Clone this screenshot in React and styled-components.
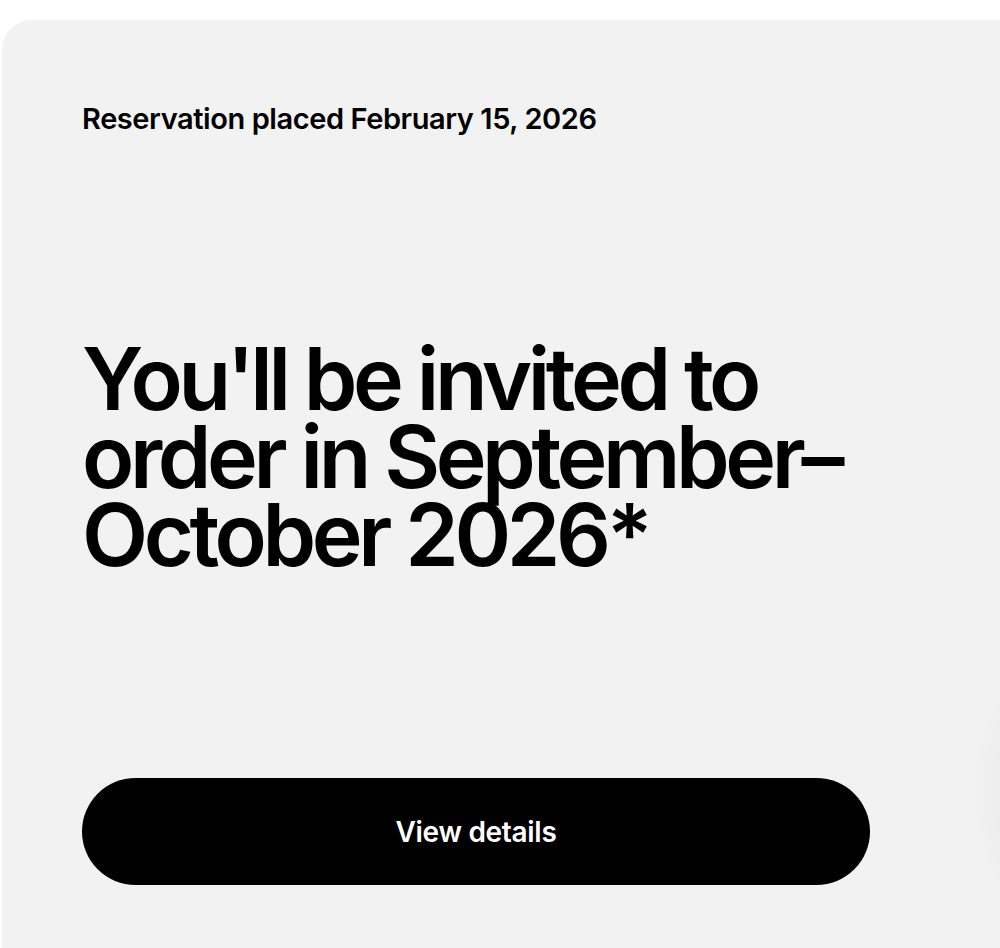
import React from "react";
import styled, { createGlobalStyle } from "styled-components";

const Global = createGlobalStyle`
  html, body {
    margin: 0;
    padding: 0;
    background: #ffffff;
    overflow: hidden;
  }
  body {
    font-family: Inter, "Noto Sans", "Liberation Sans", sans-serif;
    color: #000;
    -webkit-font-smoothing: antialiased;
  }
`;

const Page = styled.div`
  padding: 20px 0 0 2px;
  width: 1000px;
  height: 948px;
  box-sizing: border-box;
`;

const Card = styled.section`
  width: 1060px;
  height: 960px;
  box-sizing: border-box;
  border-radius: 30px;
  background-color: #f2f2f2;
  background-image: radial-gradient(
    ellipse 60px 120px at 1030px 770px,
    rgba(0, 0, 0, 0.05),
    rgba(0, 0, 0, 0) 100%
  );
  padding: 81px 0 0 80px;
  display: flex;
  flex-direction: column;
  align-items: flex-start;
`;

const Meta = styled.p`
  margin: 0;
  font-size: 29px;
  line-height: 36px;
  font-weight: 560;
  letter-spacing: -0.42px;
`;

const Heading = styled.h1`
  margin: 203px 0 0 0;
  font-size: 86px;
  line-height: 78px;
  font-weight: 620;
  letter-spacing: -4.4px;
`;

const Action = styled.button`
  margin-top: 204px;
  width: 788px;
  height: 107px;
  border: none;
  border-radius: 54px;
  background: #000;
  color: #fff;
  font-family: inherit;
  font-size: 28px;
  font-weight: 560;
  letter-spacing: -0.3px;
  cursor: pointer;
`;

export default function App() {
  return (
    <>
      <Global />
      <Page>
        <Card>
          <Meta>Reservation placed February 15, 2026</Meta>
          <Heading>
            You'll be invited to
            <br />
            order in September–
            <br />
            October 2026*
          </Heading>
          <Action>View details</Action>
        </Card>
      </Page>
    </>
  );
}
